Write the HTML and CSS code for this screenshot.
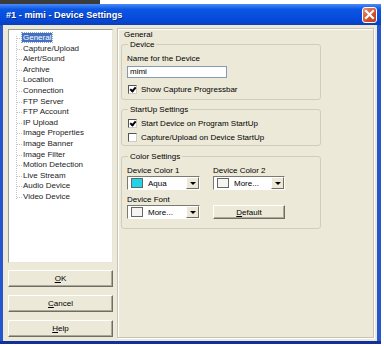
FILE: index.html
```html
<!DOCTYPE html>
<html lang="en">
<head>
  <meta charset="UTF-8" />
  <title>#1 - mimi - Device Settings</title>
  <link rel="stylesheet" href="styles.css">
</head>
<body>
  <div class="desk"></div>
  <div class="window">
    <div class="titlebar">
      <span class="title">#1 - mimi - Device Settings</span>
      <span class="close">
        <svg width="11" height="11" viewBox="0 0 11 11"><path d="M2 2 L9 9 M9 2 L2 9" stroke="#fff" stroke-width="2.2" stroke-linecap="square"/></svg>
      </span>
    </div>

    <div class="content">
      <div class="side">
        <ul class="tree">
          <li><span class="sel">General</span></li>
          <li>Capture/Upload</li>
          <li>Alert/Sound</li>
          <li>Archive</li>
          <li>Location</li>
          <li>Connection</li>
          <li>FTP Server</li>
          <li>FTP Account</li>
          <li>IP Upload</li>
          <li>Image Properties</li>
          <li>Image Banner</li>
          <li>Image Filter</li>
          <li>Motion Detection</li>
          <li>Live Stream</li>
          <li>Audio Device</li>
          <li>Video Device</li>
        </ul>
        <button class="btn side-btn"><u>O</u>K</button>
        <button class="btn side-btn"><u>C</u>ancel</button>
        <button class="btn side-btn"><u>H</u>elp</button>
      </div>

      <div class="panel">
        <div class="panel-title">General</div>

        <fieldset class="group device">
          <legend>Device</legend>
          <div class="field-label">Name for the Device</div>
          <div class="textbox">mimi</div>
          <label class="check"><span class="box on"></span>Show Capture Progressbar</label>
        </fieldset>

        <fieldset class="group startup">
          <legend>StartUp Settings</legend>
          <label class="check"><span class="box on"></span>Start Device on Program StartUp</label>
          <label class="check"><span class="box"></span>Capture/Upload on Device StartUp</label>
        </fieldset>

        <fieldset class="group colors">
          <legend>Color Settings</legend>
          <div class="color-grid">
            <div class="field-label">Device Color 1</div>
            <div class="field-label">Device Color 2</div>
            <div class="combo"><span class="swatch aqua"></span><span class="combo-text">Aqua</span><span class="arrow"></span></div>
            <div class="combo"><span class="swatch"></span><span class="combo-text">More...</span><span class="arrow"></span></div>
            <div class="field-label">Device Font</div>
            <div></div>
            <div class="combo"><span class="swatch"></span><span class="combo-text">More...</span><span class="arrow"></span></div>
            <button class="btn default-btn"><u>D</u>efault</button>
          </div>
        </fieldset>
      </div>
    </div>
  </div>
</body>
</html>
```

FILE: styles.css
```css
body {
  margin: 0;
  background: #fff;
  font-family: "Liberation Sans", Arial, sans-serif;
  font-size: 8px;
  color: #000;
}
.desk {
  height: 4px;
  background: linear-gradient(to right, #3b3b3b 100px, #fff 100px);
}
.window {
  width: 381px;
  background: #2556d0;
  border-bottom: 3px solid #12309a;
  box-sizing: border-box;
}
.titlebar {
  height: 21px;
  display: flex;
  align-items: center;
  justify-content: space-between;
  padding: 0 4px 0 6px;
  background: linear-gradient(#4a8cf6, #0c56e4 25%, #0549db 75%, #0a3fb8);
}
.title {
  color: #fff;
  font-weight: bold;
  font-size: 9.2px;
  text-shadow: 1px 1px 0 #0a2a80;
}
.close {
  width: 15px;
  height: 16px;
  box-sizing: border-box;
  border: 1px solid #fff;
  border-radius: 3px;
  background: linear-gradient(135deg, #eb8d70, #d2502c 60%, #b8391c);
  display: flex;
  align-items: center;
  justify-content: center;
}
.content {
  margin: 0 4px 0 3px;
  height: 316px;
  background: #ece9d8;
  display: flex;
  padding: 4px 3px 0 5px;
  box-sizing: border-box;
  gap: 4px;
}
.side {
  width: 105px;
  display: flex;
  flex-direction: column;
}
.tree {
  list-style: none;
  margin: 0;
  padding: 3px 0 0 14px;
  height: 234px;
  box-sizing: border-box;
  background: #fff;
  border: 1px solid #9d9d91;
  border-right-color: #e8e6dc;
  border-bottom-color: #e8e6dc;
  position: relative;
}
.tree::before {
  content: "";
  position: absolute;
  left: 7px;
  top: 6px;
  height: 163px;
  border-left: 1px dotted #c4c4c4;
}
.tree li {
  line-height: 10.6px;
  height: 10.6px;
  white-space: nowrap;
  position: relative;
  color: #222;
}
.tree li::before {
  content: "";
  position: absolute;
  left: -6px;
  top: 5px;
  width: 5px;
  border-top: 1px dotted #c4c4c4;
}
.sel {
  background: #4470c0;
  color: #fff;
  padding: 0 1px;
  margin-left: -1px;
  outline: 1px dotted #8fa3c8;
}
.btn {
  font-family: "Liberation Sans", Arial, sans-serif;
  font-size: 8px;
  color: #000;
  background: #ece9d8;
  border: 1px solid;
  border-color: #fff #6f6d64 #6f6d64 #fff;
  box-shadow: inset -1px -1px 0 #aca899;
  padding: 0;
}
.side-btn {
  height: 17px;
  margin-top: 8px;
}
.side-btn:first-of-type {
  margin-top: 7px;
}
.panel {
  width: 257px;
  height: 310px;
  margin-top: -1px;
  box-sizing: border-box;
  border: 1px solid #c7c4b4;
  box-shadow: inset 1px 1px 0 #fff, 1px 1px 0 #fff;
  padding: 0 0 0 3px;
}
.panel-title {
  line-height: 9px;
  padding: 1px 0 0 3px;
}
.group {
  width: 200px;
  box-sizing: border-box;
  margin: 0;
  border: 1px solid #d0cdbc;
  border-radius: 3px;
  padding: 0 5px;
}
.group legend {
  line-height: 9px;
  padding: 0 2px;
  margin-left: 1px;
}
.device {
  margin-top: 1px;
  padding-top: 5px;
  padding-bottom: 5px;
}
.startup {
  margin-top: 5px;
  padding-top: 4px;
  padding-bottom: 3px;
}
.colors {
  margin-top: 6px;
  padding-top: 5px;
  padding-bottom: 4px;
}
.field-label {
  line-height: 9px;
}
.textbox {
  margin-top: 3px;
  width: 100px;
  height: 12px;
  box-sizing: border-box;
  background: #fff;
  border: 1px solid #8a9aae;
  line-height: 10px;
  padding-left: 2px;
}
.check {
  display: flex;
  align-items: center;
  height: 10px;
  gap: 4px;
  margin-left: 1px;
}
.device .check {
  margin-top: 6px;
}
.startup .check + .check {
  margin-top: 4px;
}
.box {
  width: 9px;
  height: 9px;
  box-sizing: border-box;
  background: #fff;
  border: 1px solid #555;
  border-right-color: #ccc;
  border-bottom-color: #ccc;
  position: relative;
}
.box.on::after {
  content: "";
  position: absolute;
  left: 2px;
  top: 0px;
  width: 2px;
  height: 4px;
  border: solid #000;
  border-width: 0 2px 2px 0;
  transform: rotate(40deg);
}
.color-grid {
  display: grid;
  grid-template-columns: 73px 72px;
  column-gap: 13px;
}
.combo {
  height: 14px;
  margin: 1px 0 5px;
  box-sizing: border-box;
  background: #fff;
  border: 1px solid;
  border-color: #7a7a70 #fff #fff #7a7a70;
  display: flex;
  align-items: center;
  padding-left: 3px;
}
.swatch {
  width: 10px;
  height: 8px;
  border: 1px solid #666;
  background: #f4f4f0;
}
.swatch.aqua {
  background: #1fd4e6;
}
.combo-text {
  flex: 1;
  padding-left: 5px;
}
.arrow {
  width: 13px;
  height: 12px;
  box-sizing: border-box;
  background: #ece9d8;
  border: 1px solid;
  border-color: #fff #6f6d64 #6f6d64 #fff;
  position: relative;
}
.arrow::after {
  content: "";
  position: absolute;
  left: 3px;
  top: 4px;
  border: 3px solid transparent;
  border-top: 3px solid #000;
  border-bottom: 0;
}
.default-btn {
  height: 14px;
  margin-top: 1px;
}
```
